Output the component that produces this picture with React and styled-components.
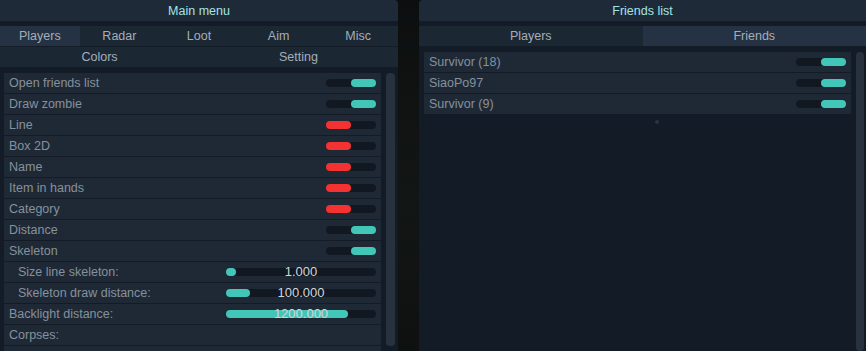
import React from "react";
import styled, { createGlobalStyle } from "styled-components";

const GlobalStyle = createGlobalStyle`
  html, body {
    margin: 0;
    padding: 0;
    background: #0a0e0f;
    overflow: hidden;
  }
`;

const Screen = styled.div`
  width: 866px;
  height: 351px;
  display: flex;
  gap: 21px;
  font-family: "Liberation Sans", Arial, sans-serif;
  font-size: 12.5px;
  background: radial-gradient(circle at 410px 200px, #121614 0%, #080a0b 70%);
`;

const Panel = styled.div`
  display: flex;
  flex-direction: column;
  width: ${(p) => (p.$width ? `${p.$width}px` : "auto")};
  flex: ${(p) => (p.$width ? "none" : "1")};
  background: #131c26;
  border-radius: ${(p) => (p.$side === "left" ? "0 4px 0 0" : "4px 0 0 0")};
  overflow: hidden;
`;

const TitleBar = styled.div`
  height: 21px;
  display: flex;
  align-items: center;
  justify-content: center;
  background: #1e2a38;
  color: #a6e4e4;
  font-size: 12.5px;
  margin-bottom: 5px;
`;

const TabRow = styled.div`
  display: flex;
  height: 20px;
  background: #1c2734;
  & + & {
    margin-top: 1px;
  }
`;

const Tab = styled.div`
  flex: 1;
  display: flex;
  align-items: center;
  justify-content: center;
  color: #a4aeb8;
  background: ${(p) => (p.$active ? "#243243" : "transparent")};
`;

const Body = styled.div`
  flex: 1;
  display: flex;
  gap: 5px;
  padding: ${(p) => p.$pad};
  min-height: 0;
`;

const List = styled.div`
  flex: 1;
  display: flex;
  flex-direction: column;
  gap: 1px;
`;

const Row = styled.div`
  height: 20px;
  display: flex;
  align-items: center;
  justify-content: space-between;
  padding: 0 5px 0 ${(p) => (p.$indent ? 14 : 5)}px;
  background: #1f2936;
  color: #85919d;
  flex: none;
`;

const Label = styled.span`
  white-space: nowrap;
`;

const Track = styled.div`
  position: relative;
  width: ${(p) => p.$w}px;
  height: 8px;
  border-radius: 4px;
  background: #111821;
  display: flex;
  justify-content: ${(p) => (p.$on ? "flex-end" : "flex-start")};
`;

const Knob = styled.div`
  width: 25px;
  height: 8px;
  border-radius: 4px;
  background: ${(p) => (p.$on ? "#42c6b8" : "#f53232")};
`;

const Fill = styled.div`
  height: 8px;
  border-radius: 4px;
  background: #42c6b8;
`;

const Value = styled.span`
  position: absolute;
  left: 0;
  right: 0;
  top: -4px;
  text-align: center;
  font-family: "Liberation Sans", Arial, sans-serif;
  font-size: 13px;
  color: #d2d6d9;
  line-height: 16px;
`;

const Scrollbar = styled.div`
  width: ${(p) => p.$w}px;
  flex: none;
  border-radius: 4px;
  background: #28323f;
  margin-bottom: ${(p) => p.$mb || 0}px;
`;

const FriendsColumn = styled.div`
  flex: 1;
`;

const Dot = styled.div`
  width: 4px;
  height: 4px;
  border-radius: 50%;
  background: #2a3440;
  margin: 6px 0 0 231px;
`;

function Toggle({ on }) {
  return (
    <Track $w={50} $on={on}>
      <Knob $on={on} />
    </Track>
  );
}

function Slider({ fill, value }) {
  return (
    <Track $w={150}>
      <Fill style={{ width: fill }} />
      <Value>{value}</Value>
    </Track>
  );
}

const settings = [
  { label: "Open friends list", on: true },
  { label: "Draw zombie", on: true },
  { label: "Line", on: false },
  { label: "Box 2D", on: false },
  { label: "Name", on: false },
  { label: "Item in hands", on: false },
  { label: "Category", on: false },
  { label: "Distance", on: true },
  { label: "Skeleton", on: true },
  { label: "Size line skeleton:", slider: 10, value: "1.000", indent: true },
  { label: "Skeleton draw distance:", slider: 24, value: "100.000", indent: true },
  { label: "Backlight distance:", slider: 122, value: "1200.000" },
  { label: "Corpses:" },
  { label: "" },
];

const friends = ["Survivor (18)", "SiaoPo97", "Survivor (9)"];

export default function App() {
  return (
    <Screen>
      <GlobalStyle />
      <Panel $width={398} $side="left">
        <TitleBar>Main menu</TitleBar>
        <TabRow>
          <Tab $active>Players</Tab>
          <Tab>Radar</Tab>
          <Tab>Loot</Tab>
          <Tab>Aim</Tab>
          <Tab>Misc</Tab>
        </TabRow>
        <TabRow>
          <Tab>Colors</Tab>
          <Tab>Setting</Tab>
        </TabRow>
        <Body $pad="6px 3px 0 4px">
          <List>
            {settings.map((s, i) => (
              <Row key={i} $indent={s.indent}>
                <Label>{s.label}</Label>
                {s.slider ? (
                  <Slider fill={s.slider} value={s.value} />
                ) : s.on !== undefined ? (
                  <Toggle on={s.on} />
                ) : null}
              </Row>
            ))}
          </List>
          <Scrollbar $w={9} $mb={5} />
        </Body>
      </Panel>
      <Panel $side="right">
        <TitleBar>Friends list</TitleBar>
        <TabRow>
          <Tab>Players</Tab>
          <Tab $active>Friends</Tab>
        </TabRow>
        <Body $pad="6px 2px 0 5px">
          <FriendsColumn>
            <List>
              {friends.map((f) => (
                <Row key={f}>
                  <Label>{f}</Label>
                  <Toggle on />
                </Row>
              ))}
            </List>
            <Dot />
          </FriendsColumn>
          <Scrollbar $w={8} />
        </Body>
      </Panel>
    </Screen>
  );
}
